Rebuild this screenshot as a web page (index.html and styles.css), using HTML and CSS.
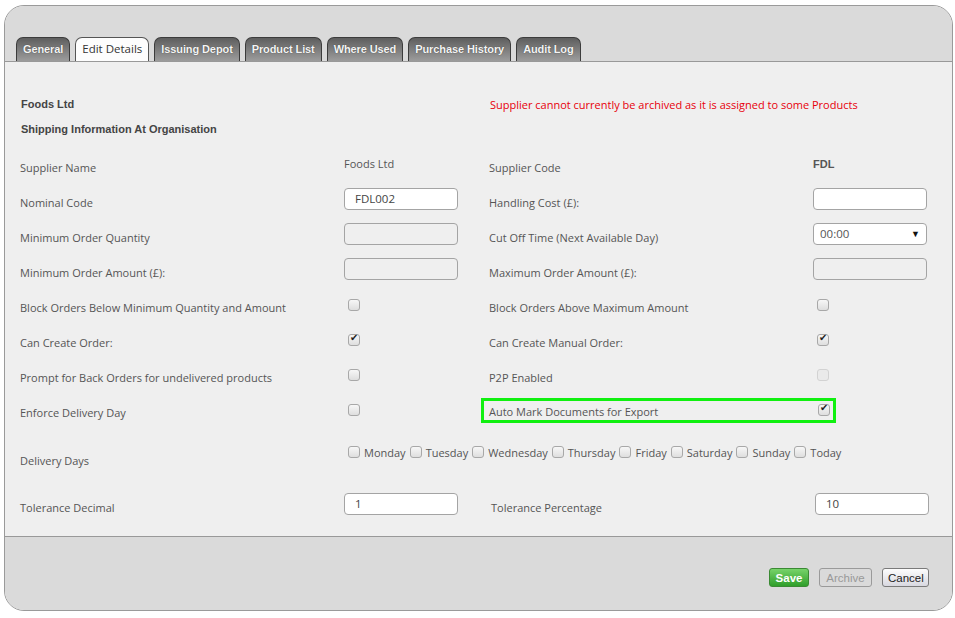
FILE: index.html
```html
<!DOCTYPE html>
<html lang="en">
<head>
    <meta charset="UTF-8">
    <title>Supplier - Edit Details</title>
    <link rel="stylesheet" href="styles.css">
</head>
<body>
    <div class="panel">
        <div class="header">
            <div class="tabs">
                <div class="tab">General</div>
                <div class="tab active">Edit Details</div>
                <div class="tab">Issuing Depot</div>
                <div class="tab">Product List</div>
                <div class="tab">Where Used</div>
                <div class="tab">Purchase History</div>
                <div class="tab">Audit Log</div>
            </div>
        </div>

        <div class="content">
            <div class="intro">
                <div class="intro-left">
                    <div class="heading">Foods Ltd</div>
                    <div class="heading">Shipping Information At Organisation</div>
                </div>
                <div class="warning">Supplier cannot currently be archived as it is assigned to some Products</div>
            </div>

            <div class="form">
                <div class="label">Supplier Name</div>
                <div class="value"><span class="static">Foods Ltd</span></div>
                <div class="label">Supplier Code</div>
                <div class="value"><span class="code">FDL</span></div>

                <div class="label">Nominal Code</div>
                <div class="value"><div class="input">FDL002</div></div>
                <div class="label">Handling Cost (£):</div>
                <div class="value"><div class="input"></div></div>

                <div class="label">Minimum Order Quantity</div>
                <div class="value"><div class="input disabled"></div></div>
                <div class="label">Cut Off Time (Next Available Day)</div>
                <div class="value"><div class="input select">00:00<span class="arrow">▼</span></div></div>

                <div class="label">Minimum Order Amount (£):</div>
                <div class="value"><div class="input disabled"></div></div>
                <div class="label">Maximum Order Amount (£):</div>
                <div class="value"><div class="input disabled"></div></div>

                <div class="label">Block Orders Below Minimum Quantity and Amount</div>
                <div class="value"><span class="cb"></span></div>
                <div class="label">Block Orders Above Maximum Amount</div>
                <div class="value"><span class="cb"></span></div>

                <div class="label">Can Create Order:</div>
                <div class="value"><span class="cb checked"></span></div>
                <div class="label">Can Create Manual Order:</div>
                <div class="value"><span class="cb checked"></span></div>

                <div class="label">Prompt for Back Orders for undelivered products</div>
                <div class="value"><span class="cb"></span></div>
                <div class="label">P2P Enabled</div>
                <div class="value"><span class="cb off"></span></div>

                <div class="label">Enforce Delivery Day</div>
                <div class="value"><span class="cb"></span></div>
                <div class="highlight">
                    <span class="label">Auto Mark Documents for Export</span>
                    <span class="cb checked"></span>
                </div>

                <div class="label days-label">Delivery Days</div>
                <div class="days">
                    <span class="cb"></span><span class="day">Monday</span>
                    <span class="cb"></span><span class="day">Tuesday</span>
                    <span class="cb"></span><span class="day">Wednesday</span>
                    <span class="cb"></span><span class="day">Thursday</span>
                    <span class="cb"></span><span class="day">Friday</span>
                    <span class="cb"></span><span class="day">Saturday</span>
                    <span class="cb"></span><span class="day">Sunday</span>
                    <span class="cb"></span><span class="day">Today</span>
                </div>

                <div class="label">Tolerance Decimal</div>
                <div class="value"><div class="input">1</div></div>
                <div class="label shift">Tolerance Percentage</div>
                <div class="value shift"><div class="input">10</div></div>
            </div>
        </div>

        <div class="footer">
            <button class="btn save">Save</button>
            <button class="btn archive">Archive</button>
            <button class="btn cancel">Cancel</button>
        </div>
    </div>
</body>
</html>
```

FILE: styles.css
```css
body {
    margin: 0;
    padding: 5px 0 0 4px;
    background: #ffffff;
    font-family: "Open Sans", "Noto Sans", sans-serif;
    font-size: 11px;
    color: #555;
}

.panel {
    width: 947px;
    height: 604px;
    border: 1px solid #9a9a9a;
    border-radius: 20px;
    overflow: hidden;
    background: #efefef;
    display: flex;
    flex-direction: column;
}

.header {
    height: 55px;
    flex-shrink: 0;
    background: #dadada;
    border-bottom: 1px solid #999;
    display: flex;
    align-items: flex-end;
}

.tabs {
    display: flex;
    gap: 5px;
    padding-left: 11px;
}

.tab {
    height: 23px;
    line-height: 22px;
    padding: 0 6px;
    border: 1px solid #3c3c3c;
    border-bottom: none;
    border-radius: 7px 7px 0 0;
    background: linear-gradient(#5e5e5e, #9c9c9c);
    color: #f4f4f4;
    font-family: "Liberation Sans", Arial, sans-serif;
    font-weight: bold;
    font-size: 11px;
    letter-spacing: -0.1px;
    text-shadow: 0 0 1px #333;
}

.tab.active {
    background: #fdfdfd;
    color: #333;
    border-color: #555;
    text-shadow: none;
    font-weight: normal;
    font-family: "Open Sans", sans-serif;
    font-size: 11.5px;
    letter-spacing: 0;
}

.content {
    flex: 1;
    padding: 36px 0 0 15px;
}

.intro {
    display: flex;
    height: 50px;
}

.intro-left {
    width: 469px;
}

.heading {
    font-family: "Liberation Sans", Arial, sans-serif;
    font-weight: bold;
    font-size: 11px;
    color: #444;
    height: 25px;
    padding-left: 1px;
}

.warning {
    color: #e8000b;
    font-size: 11px;
    line-height: 14px;
    padding-left: 1px;
}

.form {
    display: grid;
    grid-template-columns: 324px 145px 324px 120px;
    grid-template-rows: repeat(8, 35px) 55px 45px;
    align-items: center;
}

.label {
    padding-top: 3px;
}

.value {
    display: flex;
    align-items: center;
}

.static {
    padding-bottom: 4px;
}

.code {
    font-family: "Liberation Sans", Arial, sans-serif;
    font-weight: bold;
    color: #555;
    padding-bottom: 4px;
}

.input {
    box-sizing: border-box;
    width: 114px;
    height: 22px;
    margin-top: -3px;
    border: 1px solid #a4a4a4;
    border-radius: 4px;
    background: #fff;
    padding: 0 10px;
    line-height: 20px;
    color: #444;
    font-size: 11.5px;
}

.input.disabled {
    background: #efefef;
}

.input.select {
    position: relative;
    padding-left: 6px;
    color: #555;
}

.arrow {
    position: absolute;
    right: 6px;
    top: 0;
    font-size: 9px;
    color: #111;
}

.cb {
    display: inline-block;
    box-sizing: border-box;
    width: 12px;
    height: 12px;
    border: 1px solid #a8a8a8;
    border-radius: 3px;
    background: linear-gradient(#f7f7f7, #dedede);
    margin-left: 4px;
    margin-top: -2px;
    position: relative;
}

.cb.checked::after {
    content: "✔";
    position: absolute;
    left: 1px;
    top: -3px;
    font-family: "DejaVu Sans", sans-serif;
    font-size: 10px;
    color: #222;
}

.cb.off {
    border-color: #d2d2d2;
    background: #eaeaea;
}

.highlight {
    grid-column: 3 / 5;
    margin-left: -8px;
    width: 344px;
    height: 19px;
    border: 3px solid #10f010;
    display: flex;
    align-items: center;
    justify-content: space-between;
    padding-left: 5px;
}

.highlight .label {
    padding-top: 1px;
}

.highlight .cb {
    margin: 0 3px 0 0;
    top: -1px;
}

.days-label {
    padding-top: 9px;
}

.days {
    grid-column: 2 / 5;
    align-self: start;
    padding-top: 17px;
    display: flex;
    align-items: center;
}

.days .cb {
    margin: 0 0 0 4px;
    top: -1px;
}

.day {
    margin-left: 4px;
    font-size: 11px;
}

.shift {
    margin-left: 2px;
}

.footer {
    height: 74px;
    flex-shrink: 0;
    background: #dadada;
    border-top: 1px solid #999;
    display: flex;
    justify-content: flex-end;
    align-items: flex-start;
    padding: 31px 23px 0 0;
    box-sizing: border-box;
    gap: 10px;
}

.btn {
    height: 19px;
    padding: 0 5px;
    border-radius: 3px;
    font-family: "Liberation Sans", Arial, sans-serif;
    font-size: 11.5px;
    cursor: pointer;
}

.btn.save {
    width: 40px;
    background: linear-gradient(#77d36a, #2f9e2a);
    border: 1px solid #3a8a33;
    color: #fff;
    font-weight: bold;
}

.btn.archive {
    width: 53px;
    background: transparent;
    border: 1px solid #9a9a9a;
    color: #999;
}

.btn.cancel {
    width: 47px;
    background: linear-gradient(#fdfdfd, #d8d8e0);
    border: 1px solid #7a7a7a;
    color: #222;
}
```
